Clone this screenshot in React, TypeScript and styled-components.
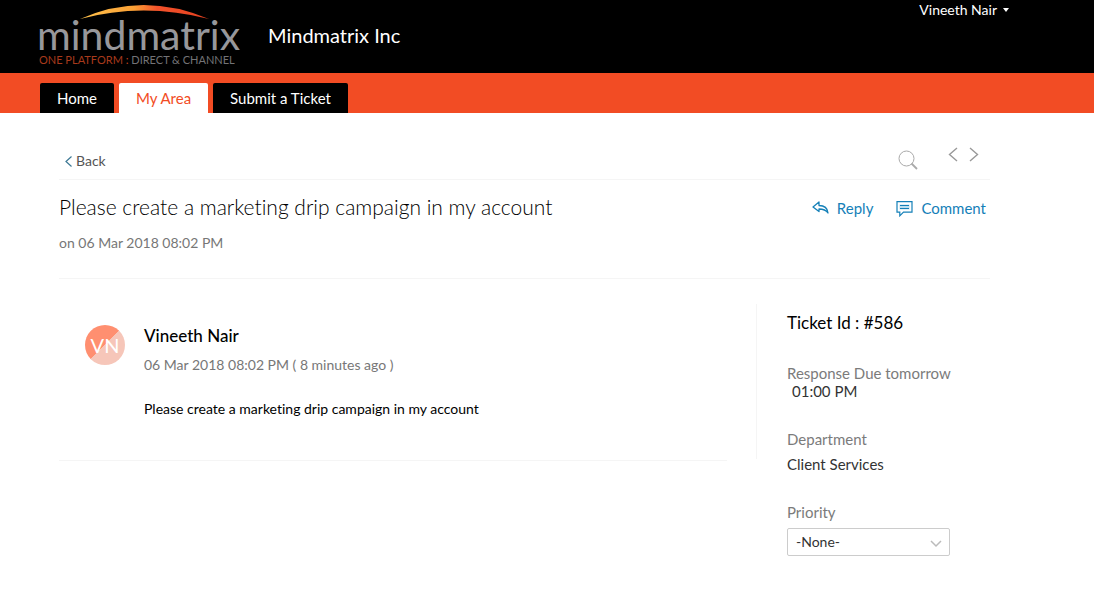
import React from "react";
import styled, { createGlobalStyle } from "styled-components";

const GlobalStyle = createGlobalStyle`
  * { box-sizing: border-box; }
  body { margin: 0; background: #fff; color: #000; font-family: Lato, "Liberation Sans", sans-serif; font-size: 14px; line-height: 20px; font-variant-ligatures: none; }
  h1, h2, h3, p { margin: 0; font-weight: 400; }
  button, select { font: inherit; }
  button { border: 0; padding: 0; background: none; cursor: pointer; }
  a { color: inherit; text-decoration: none; }
  svg { display: block; flex: none; }
`;

const Header = styled.header`
  display: flex;
  align-items: flex-start;
  height: 73px;
  padding: 0 85px 0 38px;
  background: #000;
  color: #fff;
`;

const PortalName = styled.h1`
  flex: 1;
  margin: 22px 0 0 26px;
  font-size: 20px;
  line-height: 26px;
`;

const UserMenu = styled.button`
  display: flex;
  align-items: center;
  gap: 6px;
  color: #fff;
`;

const Nav = styled.nav`
  display: flex;
  align-items: flex-end;
  gap: 5px;
  height: 40px;
  padding-left: 40px;
  background: #f24c24;
`;

const Tab = styled.a<{ $active?: boolean }>`
  height: 30px;
  padding: 0 17px;
  border-radius: 2px 2px 0 0;
  background: ${(p) => (p.$active ? "#fff" : "#000")};
  color: ${(p) => (p.$active ? "#f24c24" : "#fff")};
  font-size: 15px;
  line-height: 30px;
`;

const Main = styled.main`
  padding: 34px 104px 32px 59px;
`;

const Toolbar = styled.div`
  display: flex;
  align-items: flex-start;
  height: 33px;
  padding-right: 11px;
  border-bottom: 1px solid #f5f5f5;
`;

const BackLink = styled.a`
  display: flex;
  align-items: center;
  gap: 4px;
  margin: 4px auto 0 6px;
  color: #555;
`;

const SearchButton = styled.button`
  margin: 3px 30px 0 0;
`;

const Pager = styled.div`
  display: flex;
  gap: 11px;
`;

const Title = styled.section`
  display: flex;
  justify-content: space-between;
  align-items: flex-start;
  height: 99px;
  padding: 13px 4px 0 0;
  border-bottom: 1px solid #f5f5f5;
`;

const Subject = styled.h2`
  font-size: 21px;
  font-weight: 300;
  line-height: 28px;
`;

const Created = styled.p`
  margin-top: 12px;
  color: #777;
`;

const Actions = styled.div`
  display: flex;
  gap: 23px;
  padding-top: 5px;
`;

const Action = styled.button`
  display: flex;
  align-items: center;
  gap: 8px;
  color: #1580b8;
  font-size: 15px;
`;

const Columns = styled.div`
  display: flex;
  align-items: flex-start;
  padding-top: 25px;
`;

const Thread = styled.article`
  display: flex;
  flex: 1;
  gap: 19px;
  height: 157px;
  margin-right: 29px;
  padding: 21px 0 0 26px;
  border-bottom: 1px solid #f5f5f5;
`;

const Avatar = styled.div`
  flex: none;
  width: 40px;
  height: 40px;
  border-radius: 50%;
  background: linear-gradient(135deg, #ff8f70 50%, #f6c6b9 50%);
  color: #fff;
  font-size: 20px;
  line-height: 40px;
  text-align: center;
`;

const Author = styled.h3`
  font-size: 17px;
  font-weight: 500;
  line-height: 22px;
`;

const Posted = styled.p`
  margin-top: 8px;
  color: #777;
`;

const Message = styled.p`
  margin-top: 24px;
`;

const Details = styled.aside`
  width: 234px;
  padding: 8px 0 0 31px;
  background: linear-gradient(#f5f5f5, #f5f5f5) 0 0 / 1px 155px no-repeat;
`;

const TicketId = styled.h3`
  font-size: 17px;
  line-height: 22px;
`;

const Field = styled.div`
  margin-top: 30px;
  font-size: 15px;
`;

const Label = styled.label`
  display: block;
  color: #7b7b7b;
  line-height: 18px;
`;

const Value = styled.p<{ $indent?: boolean }>`
  margin: ${(p) => (p.$indent ? "0 0 0 5px" : "7px 0 0")};
  color: #333;
  line-height: 18px;
`;

const SelectBox = styled.div`
  display: grid;
  align-items: center;
  width: 163px;
  margin-top: 7px;
  > * { grid-area: 1 / 1; }
  > svg { justify-self: end; margin: 4px 8px 0 0; pointer-events: none; }
`;

const Select = styled.select`
  width: 100%;
  height: 28px;
  padding: 0 8px;
  appearance: none;
  border: 1px solid #ccc;
  border-radius: 2px;
  background: #fff;
  color: #333;
  font-size: 14px;
`;

const Logo = () => (
  <svg width="204" height="70" viewBox="0 0 204 70" role="img" aria-label="Mindmatrix">
    <defs>
      <linearGradient id="arc">
        <stop offset="0" stopColor="#ffc34d" />
        <stop offset="0.42" stopColor="#fba035" />
        <stop offset="0.6" stopColor="#f3522b" />
        <stop offset="1" stopColor="#e5401f" />
      </linearGradient>
    </defs>
    <path d="M42 19 Q105 -9 171 19 Q105 2 42 19Z" fill="url(#arc)" />
    <text x="-1" y="50" fontSize="41" fill="#97979b">mindmatrix</text>
    <text x="1" y="64" fontSize="11" fill="#a83a1c">
      ONE PLATFORM <tspan fill="#c9431f">:</tspan> <tspan fill="#737376">DIRECT &amp; CHANNEL</tspan>
    </text>
  </svg>
);

const Chevron = ({ right = false }) => (
  <svg width="10" height="15" viewBox="0 0 10 15" fill="none" stroke="#999" strokeWidth="1.4">
    <path d={right ? "M1 1 8.5 7.5 1 14" : "M9 1 1.5 7.5 9 14"} />
  </svg>
);

export default function App() {
  return (
    <>
      <GlobalStyle />
      <Header>
        <Logo />
        <PortalName>Mindmatrix Inc</PortalName>
        <UserMenu>
          Vineeth Nair
          <svg width="6" height="4" viewBox="0 0 6 4" fill="#fff"><path d="M0 0h6L3 4z" /></svg>
        </UserMenu>
      </Header>
      <Nav>
        <Tab href="#home">Home</Tab>
        <Tab href="#area" $active>My Area</Tab>
        <Tab href="#submit">Submit a Ticket</Tab>
      </Nav>
      <Main>
        <Toolbar>
          <BackLink href="#back">
            <svg width="7" height="11" viewBox="0 0 7 11" fill="none" stroke="#3c7894" strokeWidth="1.2"><path d="M6.5.5 1 5.5l5.5 5" /></svg>
            Back
          </BackLink>
          <SearchButton aria-label="Search">
            <svg width="20" height="20" viewBox="0 0 20 20" fill="none" stroke="#aaa">
              <circle cx="8.5" cy="8.5" r="7.5" />
              <path d="M13.5 13.5 19 19" strokeWidth="1.8" />
            </svg>
          </SearchButton>
          <Pager>
            <button aria-label="Previous ticket"><Chevron /></button>
            <button aria-label="Next ticket"><Chevron right /></button>
          </Pager>
        </Toolbar>
        <Title>
          <div>
            <Subject>Please create a marketing drip campaign in my account</Subject>
            <Created>on 06 Mar 2018 08:02 PM</Created>
          </div>
          <Actions>
            <Action>
              <svg width="17" height="14" viewBox="0 0 17 14" fill="none" stroke="#1580b8" strokeWidth="1.3" strokeLinejoin="round">
                <path d="M7 1 1 6l6 4.5V8c4 0 7 1 9 4-.5-5-4-7.500-9-7.500z" />
              </svg>
              Reply
            </Action>
            <Action>
              <svg width="17" height="17" viewBox="0 0 17 17" fill="none" stroke="#1580b8" strokeWidth="1.2">
                <path d="M3.500 4.500h10v5h-10z" fill="#bfdfee" stroke="none" />
                <path d="M1 1.600h15v10.500H7.500L3.800 15.800v-3.700H1z" />
                <path d="M4 5.500h9M4 8.500h9" strokeWidth="1" />
              </svg>
              Comment
            </Action>
          </Actions>
        </Title>
        <Columns>
          <Thread>
            <Avatar>VN</Avatar>
            <div>
              <Author>Vineeth Nair</Author>
              <Posted>06 Mar 2018 08:02 PM ( 8 minutes ago )</Posted>
              <Message>Please create a marketing drip campaign in my account</Message>
            </div>
          </Thread>
          <Details>
            <TicketId>Ticket Id : #586</TicketId>
            <Field>
              <Label as="p">Response Due tomorrow</Label>
              <Value $indent>01:00 PM</Value>
            </Field>
            <Field>
              <Label as="p">Department</Label>
              <Value>Client Services</Value>
            </Field>
            <Field>
              <Label htmlFor="priority">Priority</Label>
              <SelectBox>
                <Select id="priority" defaultValue="none">
                  <option value="none">-None-</option>
                  <option value="high">High</option>
                  <option value="medium">Medium</option>
                  <option value="low">Low</option>
                </Select>
                <svg width="12" height="8" viewBox="0 0 12 8" fill="none" stroke="#bbb" strokeWidth="1.5"><path d="m1 1 5 5 5-5" /></svg>
              </SelectBox>
            </Field>
          </Details>
        </Columns>
      </Main>
    </>
  );
}
